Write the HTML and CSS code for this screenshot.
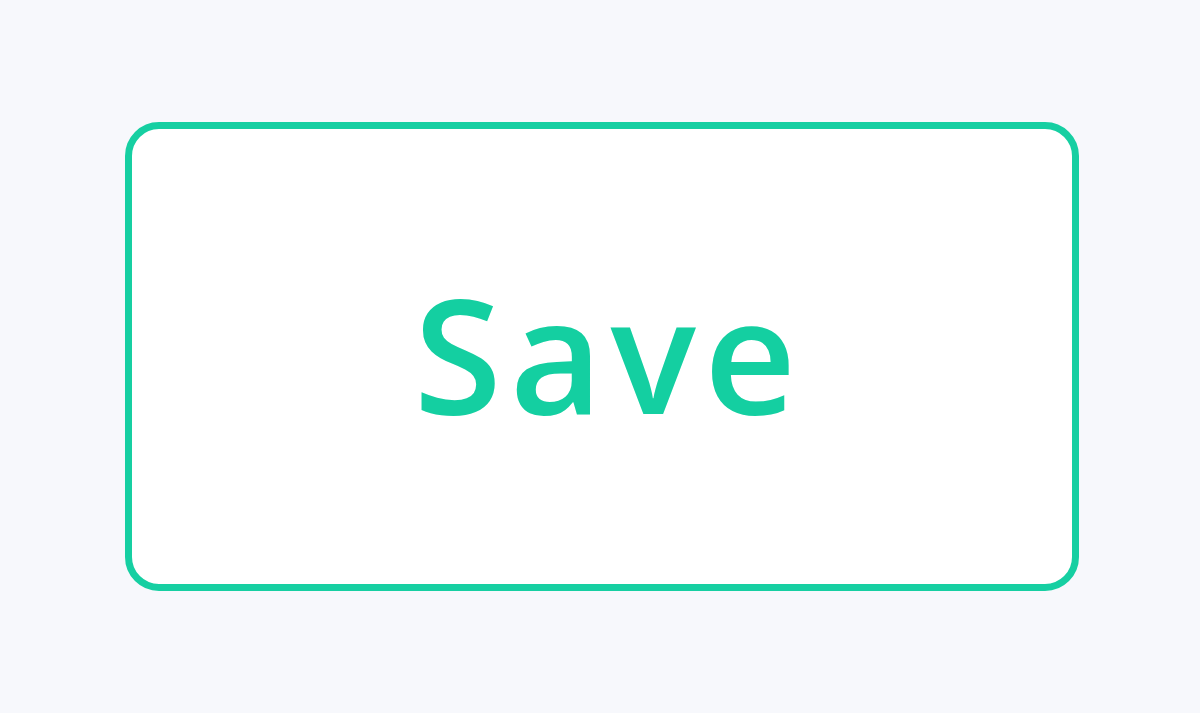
FILE: index.html
```html
<!DOCTYPE html>
<html lang="en">
<head>
<meta charset="utf-8">
<title>Save</title>
<link rel="stylesheet" href="styles.css">
</head>
<body>
<main class="stage">
  <button class="save-btn" type="button"><span class="label">Save</span></button>
</main>
</body>
</html>
```

FILE: styles.css
```css
html, body {
  margin: 0;
  padding: 0;
  background: #f7f8fc;
}
.stage {
  width: 1200px;
  height: 713px;
  box-sizing: border-box;
  padding: 122px 0 0 125px;
  display: flex;
  align-items: flex-start;
}
.save-btn {
  width: 954px;
  height: 469px;
  box-sizing: border-box;
  border: 7px solid #16cfa2;
  border-radius: 34px;
  background: #ffffff;
  display: flex;
  align-items: center;
  justify-content: center;
  padding: 0 0 10px 0;
  margin: 0;
  cursor: pointer;
}
.label {
  font-family: "Open Sans", "Noto Sans", sans-serif;
  font-size: 160px;
  font-weight: 600;
  color: #14cfa1;
  letter-spacing: 8px;
  line-height: 1;
  padding-left: 14px;
}
```
